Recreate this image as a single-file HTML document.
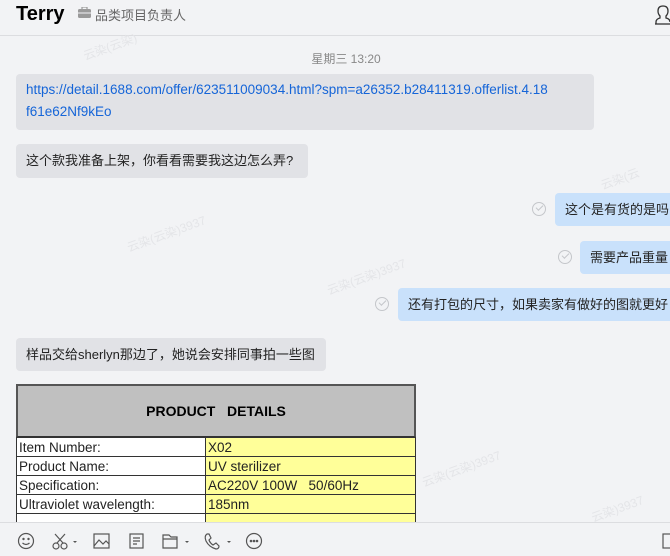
<!DOCTYPE html>
<html><head><meta charset="utf-8"><style>
*{margin:0;padding:0;box-sizing:border-box}
body{width:670px;height:556px;overflow:hidden;background:#f2f3f5;font-family:"Liberation Sans","Noto Sans CJK SC",sans-serif;position:relative;color:#222}
.a{position:absolute}
.b{position:absolute;background:#e1e2e6;border-radius:4px;font-size:13px;line-height:22px;padding:6px 10px;white-space:nowrap}
.r{background:#c9e1fb}
.chk{position:absolute;width:14px;height:14px;border:1px solid #c4c6ca;border-radius:50%}
.chk:after{content:"";position:absolute;left:3px;top:2px;width:6px;height:3px;border-left:1px solid #c4c6ca;border-bottom:1px solid #c4c6ca;transform:rotate(-45deg)}
table{border-collapse:collapse;font-family:"Liberation Sans",sans-serif;font-size:13.5px}
td{border:1px solid #333;height:19px;padding:0 2px;line-height:17px}
.wm{position:absolute;color:#e4e5e8;font-size:12px;transform:rotate(-20deg)}
</style></head><body>
<div class="a" style="left:16px;top:3px;font-size:20px;font-weight:bold;color:#000">Terry</div>
<svg class="a" style="left:78px;top:7px" width="13" height="11"><rect x="0" y="2" width="13" height="9" rx="1.5" fill="#9a9a9a"/><rect x="4" y="0" width="5" height="3" fill="none" stroke="#9a9a9a" stroke-width="1.2"/><rect x="0" y="5.5" width="13" height="1" fill="#f2f3f5"/></svg>
<div class="a" style="left:95px;top:5px;font-size:13px;color:#666">品类项目负责人</div>
<svg class="a" style="left:655px;top:5px" width="15" height="20"><path d="M1 19 L1 17 Q1 14 5 13 L5 11 Q3 9 3 6 Q3 1 8 1 Q13 1 13 6 Q13 9 11 11 L11 13 Q15 14 15 17" fill="none" stroke="#333" stroke-width="1.3"/><path d="M0 19 H15" stroke="#333" stroke-width="1.3"/></svg>
<div class="a" style="left:0;top:35px;width:670px;height:1px;background:#dcdde0"></div>
<div class="wm" style="left:82px;top:38px">云染(云染)</div>
<div class="wm" style="left:125px;top:225px">云染(云染)3937</div>
<div class="wm" style="left:325px;top:268px">云染(云染)3937</div>
<div class="wm" style="left:600px;top:170px">云染(云</div>
<div class="wm" style="left:420px;top:460px">云染(云染)3937</div>
<div class="wm" style="left:590px;top:500px">云染)3937</div>
<div class="a" style="left:0;top:50px;width:692px;text-align:center;font-size:12px;color:#888">星期三 13:20</div>
<div class="b" style="left:16px;top:74px;width:578px;height:56px;color:#1565d8;padding:5px 10px;white-space:normal;line-height:22px;font-size:13.5px">https://detail.1688.com/offer/623511009034.html?spm=a26352.b28411319.offerlist.4.18<br>f61e62Nf9kEo</div>
<div class="b" style="left:16px;top:144px;width:292px;height:34px">这个款我准备上架，你看看需要我这边怎么弄?</div>
<div class="chk" style="left:532px;top:202px"></div>
<div class="b r" style="left:555px;top:193px;width:130px;height:33px">这个是有货的是吗</div>
<div class="chk" style="left:558px;top:250px"></div>
<div class="b r" style="left:580px;top:241px;width:110px;height:33px">需要产品重量</div>
<div class="chk" style="left:375px;top:297px"></div>
<div class="b r" style="left:398px;top:288px;width:290px;height:33px">还有打包的尺寸，如果卖家有做好的图就更好</div>
<div class="b" style="left:16px;top:338px;width:310px;height:33px">样品交给sherlyn那边了，她说会安排同事拍一些图</div>
<div class="a" style="left:16px;top:384px;width:400px;height:138px;overflow:hidden;background:#fff">
<div style="height:53px;background:#c0c0c0;border:2px solid #555;border-bottom:1px solid #333;text-align:center;line-height:50px;font-weight:bold;font-size:14px;color:#000">PRODUCT&nbsp;&nbsp;&nbsp;DETAILS</div>
<table style="width:400px">
<tr><td style="width:189px">Item Number:</td><td style="background:#ffff99">X02</td></tr>
<tr><td>Product Name:</td><td style="background:#ffff99">UV sterilizer</td></tr>
<tr><td>Specification:</td><td style="background:#ffff99">AC220V 100W&nbsp;&nbsp;&nbsp;50/60Hz</td></tr>
<tr><td>Ultraviolet wavelength:</td><td style="background:#ffff99">185nm</td></tr>
<tr><td>&nbsp;</td><td style="background:#ffff99">&nbsp;</td></tr>
</table></div>
<div class="a" style="left:0;top:522px;width:670px;height:34px;background:#f2f3f5;border-top:1px solid #dcdde0"></div>
<svg class="a" style="left:0;top:522px" width="670" height="34" fill="none" stroke="#555" stroke-width="1.2">
<circle cx="26" cy="19" r="7.5"/><circle cx="23.5" cy="17" r=".6" fill="#555"/><circle cx="28.5" cy="17" r=".6" fill="#555"/><path d="M22.5 21 Q26 24 29.5 21"/>
<circle cx="56" cy="24" r="3"/><circle cx="64" cy="24" r="3"/><path d="M57 21 L65 12 M63 21 L55 12"/><path d="M73 19 l2 2 l2 -2z" fill="#555" stroke="none"/>
<rect x="94" y="12" width="15" height="14"/><path d="M94 24 L99 18 L103 22 L106 19 L109 22"/>
<rect x="130" y="12" width="13" height="14"/><path d="M133 16 H140 M133 19 H140 M133 22 H137"/>
<path d="M163 13 H169 L171 15 H177 V26 H163 Z M163 17 H177"/><path d="M185 19 l2 2 l2 -2z" fill="#555" stroke="none"/>
<path d="M207 12 Q204 14 206 19 Q209 25 216 27 Q219 27 219 24 L216 21 L213 23 Q210 21 209 18 L211 16 L209 12 Z"/><path d="M227 19 l2 2 l2 -2z" fill="#555" stroke="none"/>
<circle cx="254" cy="19" r="7.5"/><circle cx="251" cy="19" r=".7" fill="#555"/><circle cx="254" cy="19" r=".7" fill="#555"/><circle cx="257" cy="19" r=".7" fill="#555"/>
<rect x="663" y="12" width="10" height="14"/>
</svg>
</body></html>
